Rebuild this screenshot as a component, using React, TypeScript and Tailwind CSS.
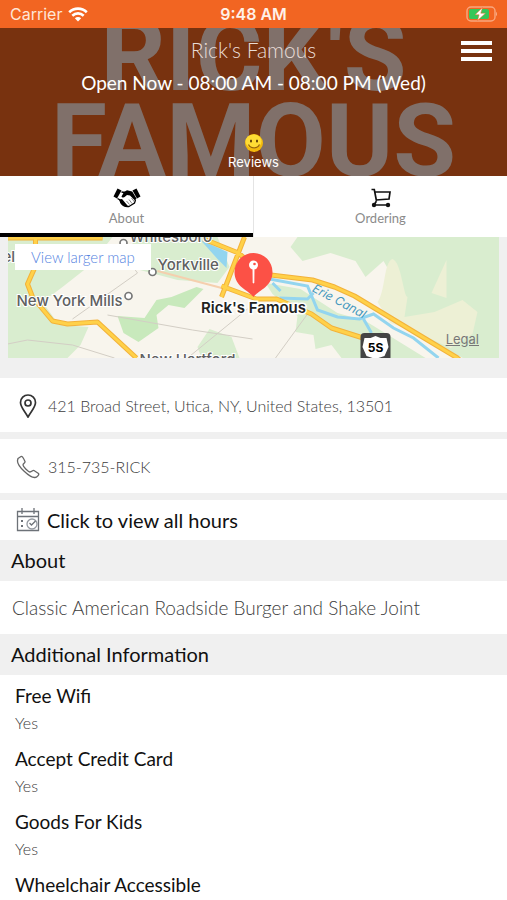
function StatusBar() {
  return (
    <div className="flex h-7 items-center justify-between bg-[#f26522] px-[10px] text-[#ffe6d6]">
      <div className="flex flex-1 items-center gap-[6px] font-[Inter] text-[16px] leading-5">
        <span>Carrier</span>
        <svg viewBox="0 0 20 15" className="h-[15px] w-5" fill="none" stroke="#fff" strokeWidth="2.6" aria-hidden="true">
          <path d="M1.2 5.3C6.2.4 13.8.4 18.8 5.3" />
          <path d="M4.3 8.7c3.3-3.1 8.1-3.1 11.4 0" />
          <path d="M6.8 11.2c1.8-1.7 4.6-1.7 6.4 0L10 14.6z" fill="#fff" stroke="none" />
        </svg>
      </div>
      <span className="font-[Inter] text-[16px] leading-5 font-semibold text-[#fff1e8]">9:48 AM</span>
      <div className="flex flex-1 justify-end">
        <svg viewBox="0 0 33 16" className="h-4 w-[33px]" aria-hidden="true">
          <rect x="3" y="1" width="28" height="14" rx="4" fill="none" stroke="#f9a77e" strokeWidth="1.4" />
          <rect x="5" y="3" width="20" height="10" rx="2" fill="#35c759" />
          <path d="M32 5.8c1.4.7 1.4 3.7 0 4.4z" fill="#f9a77e" />
          <path d="M18.500 1.500 11 8.800h4.100L13.500 14.500l8-7.300h-4.700z" fill="#fff" stroke="#f26522" strokeWidth=".5" />
        </svg>
      </div>
    </div>
  );
}

function Header() {
  return (
    <header className="relative h-[148px] overflow-hidden bg-[#78320f]">
      <div
        aria-hidden="true"
        className="absolute inset-x-0 -top-4 text-center font-[Roboto] text-[102px] leading-[86px] font-bold text-[#80706a]"
      >
        <div>RICK'S</div>
        <div>FAMOUS</div>
      </div>
      <div className="relative flex flex-col items-center">
        <h1 className="mt-[9px] text-[21px] leading-[26px] font-light text-[#e8dcd6]">Rick's Famous</h1>
        <p className="mt-2 text-[19px] leading-6 text-white">Open Now - 08:00 AM - 08:00 PM (Wed)</p>
        <button className="mt-[38px] flex flex-col items-center gap-px text-white">
          <svg viewBox="0 0 20 20" className="h-5 w-5" aria-hidden="true">
            <circle cx="10" cy="10" r="9" fill="#f3b90c" />
            <ellipse cx="9.500" cy="8.500" rx="8" ry="7" fill="#ffdc35" />
            <ellipse cx="7" cy="8" rx="1" ry="1.600" fill="#5b3a06" />
            <ellipse cx="13" cy="8" rx="1" ry="1.600" fill="#5b3a06" />
            <path d="M4.500 11.500c2 4.500 9 4.500 11 0" fill="none" stroke="#9a650a" strokeWidth="1.200" />
          </svg>
          <span className="font-[Inter] text-[13px] leading-4">Reviews</span>
        </button>
      </div>
      <button aria-label="Menu" className="absolute top-[13px] right-[15px] flex w-[31px] flex-col gap-1">
        <span className="h-1 bg-white" />
        <span className="h-1 bg-white" />
        <span className="h-1 bg-white" />
      </button>
    </header>
  );
}

function Tabs() {
  return (
    <nav className="flex h-[61px] bg-white text-[13px] leading-4 text-[#8b8b8b]">
      <button className="flex flex-1 flex-col items-center border-b-4 border-black pt-3">
        <svg viewBox="0 0 28 20" className="h-5 w-7" aria-hidden="true">
          <path d="M4.500.5 8.500 2.500 4 10.500.5 8.500zM23.500.5l-4 2L24 10.500l3.500-2z" fill="#000" />
          <path d="M8.500 4 12 4.500M4.500 10.500 7 12l1 3c2 3 5 4 8 3.500l5.500-3.500 1-3" fill="none" stroke="#000" strokeWidth="1.300" />
          <path d="M6 11.500 9 11l5.500 6.500 2 1.200c-4 .8-7-.7-8.800-3.400zM19.200 3.500 14 2.300 11 4 8.500 8.500c.5 1.600 2.600 1.300 3.700 0L14 7l3 .5 5 5 1.500-2z" fill="#000" />
          <path d="m13.500 13 3 3.500m-.5-5 3 4m-.5-5.500 3 4" fill="none" stroke="#666" strokeWidth=".8" />
        </svg>
        <span className="mt-[2px]">About</span>
      </button>
      <button className="flex flex-1 flex-col items-center border-l border-[#e4e4e4] pt-3">
        <svg viewBox="0 0 22 20" className="h-5 w-[22px]" fill="none" stroke="#111" strokeWidth="1.700" aria-hidden="true">
          <path d="M1.500 1.500h2.800l2.200 11.500M4.500 4H20l-1 7-13 1M6.500 13 4 17h15" />
          <circle cx="4" cy="17" r="2.200" fill="#111" stroke="none" />
          <circle cx="18" cy="17" r="2.200" fill="#111" stroke="none" />
        </svg>
        <span className="mt-[2px]">Ordering</span>
      </button>
    </nav>
  );
}

const roads =
  "M0 1h95m-67 0v28l-8 18 5 13 20 24 15 3 30-2 39 36M196 2l35 14 24 21 50 6 22 7 20 9 63 38 40 24 8 8M237 0l-23 60M214 49l35 13h20l35 15 20 14 38 12";

function MapView() {
  return (
    <section className="bg-[#f0f0f0] px-2 pb-5">
      <div className="relative h-[121px] overflow-hidden bg-[#f8f5ed]">
        <svg viewBox="0 0 492 121" preserveAspectRatio="xMidYMid slice" className="h-full w-full font-[Inter]" role="img" aria-label="Map of Utica">
          <path d="M0 0h105l-22 28-28 22-20 15 18 25 15 6-1 14-12 11H0zM125 0h85l12 30-12 16-40-3-45-12z" fill="#d9edcf" />
          <path d="m55 88 26 2-8 18-13 13H0V88z" fill="#d9edcf" />
          <path d="m290 0-7 10 12 14 28-8 25 8 10 16 18-16 15 26 5 40 67 35H492V0zM258 46l35 6 37 24 28 8 60 37h-84l-10-13-16 4-2-14-18-3 2-16-25-22z" fill="#d9edcf" />
          <path d="M370 65c8-10 6-40 15-43 9 3 11 38 15 38l-3 20 30-5 28-12 15 12-5 22-22 14-35-16-25-9z" fill="#edf0d5" />
          <path d="m424 56 15-33v38z" fill="#edf0d5" />
          <path d="m110 79 27 2 12-18 15-3 25-10 7 2-19 19-16-3-12 10 2 13-20 14-15-9z" fill="#c8e9bc" />
          <path d="m190 110 12-18 22 8 8 21h-38z" fill="#d9edcf" />
          <path d="m0 107 20-4 45 5 42 13M65 82l65-46-15-20M240 72l-60 49M100 78l85 15 60 9M300 77l-32 44" fill="none" stroke="#d3cec5" />
          <path d="m193 3 27 12-1 16-9-9z" fill="#93d5ef" />
          <path d="m262 42 38 7 5 12 5 12 20 7 22 2 14-5 20 14 20 10 25 20M272 61l28 1 6-6M265 46l8 8M356 82l8 14" fill="none" stroke="#93d5ef" strokeWidth="3" />
          <path d="m150 34 68 18" stroke="#f5cfae" strokeWidth="2" />
          <g fill="none" strokeLinejoin="round">
            <path d={roads} stroke="#f3b23a" strokeWidth="5" />
            <path d={roads} stroke="#ffd149" strokeWidth="3" />
          </g>
          <g fill="#606060" stroke="#fff" strokeWidth="2" paintOrder="stroke" fontSize="15" fontWeight="500">
            <text x="122" y="5">Whitesboro</text>
            <text x="150" y="33">Yorkville</text>
            <text x="9" y="69">New York Mills</text>
            <text x="132" y="128">New Hartford</text>
            <text x="-5" y="25">el</text>
          </g>
          <g fill="#fff" stroke="#777" strokeWidth="1.700">
            <circle cx="116" cy="6" r="3.500" />
            <circle cx="145" cy="35" r="3.500" />
            <circle cx="121" cy="59" r="3.500" />
          </g>
          <text x="304" y="54" transform="rotate(28 304 54)" fill="#4397bd" fontSize="12" fontStyle="italic">Erie Canal</text>
          <path d="M246 60c-5-7-19-10-19-25a19 19 0 0 1 38 0c0 15-14 18-19 25z" fill="#fc5146" />
          <circle cx="246" cy="28" r="4.500" fill="#fff" />
          <circle cx="247" cy="27" r="1.300" fill="#fc5146" />
          <path d="M245.500 31h1l-.2 15h-.6z" fill="#fff" stroke="#fff" />
          <text x="246" y="76" textAnchor="middle" fill="#222" stroke="#fff" strokeWidth="3" paintOrder="stroke" fontSize="15" fontWeight="600">Rick's Famous</text>
          <rect x="353" y="96" width="30" height="28" rx="4" fill="#444" />
          <path d="m368 99 5 2h6l2 9-4 9-9 3-9-3-4-9 2-9h6z" fill="#fff" />
          <text x="368" y="115" textAnchor="middle" fontSize="12" fontWeight="700">5S</text>
        </svg>
        <a href="#map" className="absolute top-[7px] left-[7px] bg-white px-4 py-[3px] text-[15px] leading-5 font-light text-[#5584df]">View larger map</a>
        <a href="#legal" className="absolute right-5 bottom-[11px] font-[Inter] text-[13px] leading-4 text-[#777] underline">Legal</a>
      </div>
    </section>
  );
}

function Contact() {
  return (
    <section className="flex flex-col gap-[7px] bg-[#f0f0f0] text-[16px] font-light text-[#3c3c3c]">
      <div className="flex h-[54px] items-center gap-2 bg-white pt-[2px] pl-4">
        <svg viewBox="0 0 24 24" className="h-6 w-6" fill="none" stroke="#333" strokeWidth="1.700" aria-hidden="true">
          <path d="M12 23C8 16 4.500 13 4.500 8.500a7.500 7.500 0 0 1 15 0C19.500 13 16 16 12 23z" />
          <circle cx="12" cy="9" r="3" />
        </svg>
        <span>421 Broad Street, Utica, NY, United States, 13501</span>
      </div>
      <div className="flex h-[54px] items-center gap-2 bg-white pt-[2px] pl-4">
        <svg viewBox="0 0 24 24" className="h-6 w-6" fill="none" stroke="#666" strokeWidth="1.300" aria-hidden="true">
          <path d="M2 3.500 5 1.500c1-.5 2 .5 4 5 .5 1.500-2 2-2 3.500s5 7 7 7 2.500-2 4-1.500l4.500 3c1 1-1.500 4-3.500 4C14 23 1 11 1.500 5.500z" />
        </svg>
        <a href="tel:3157357425">315-735-RICK</a>
      </div>
      <button className="flex h-10 items-center gap-[7px] bg-white pl-4 text-[20px] font-normal text-[#111]">
        <svg viewBox="0 0 24 24" className="h-6 w-6" fill="none" stroke="#6d7278" strokeWidth="1.300" aria-hidden="true">
          <path d="M1.500 3.500h21v19h-21zM1.500 8.500h21M6 0v6M18 0v6" />
          <path d="M5 13h2M5 18h2" strokeWidth="2" />
          <circle cx="16" cy="16" r="5" stroke="#9499a0" />
          <path d="m13.500 15 2 2 4-4" />
        </svg>
        <span>Click to view all hours</span>
      </button>
    </section>
  );
}

const details = ["Free Wifi", "Accept Credit Card", "Goods For Kids", "Wheelchair Accessible"];

export default function App() {
  return (
    <main className="h-screen overflow-y-auto bg-white font-[Lato,sans-serif] [scrollbar-width:none]">
      <StatusBar />
      <Header />
      <Tabs />
      <MapView />
      <Contact />
      <h2 className="bg-[#f0f0f0] px-[11px] py-2 text-[20px] leading-[25px] text-[#111]">About</h2>
      <p className="px-3 py-[14px] text-[19px] leading-[25px] font-light text-[#3c3c3c]">Classic American Roadside Burger and Shake Joint</p>
      <h2 className="bg-[#f0f0f0] px-[11px] py-2 text-[20px] leading-[25px] text-[#111]">Additional Information</h2>
      <dl className="px-[15px] pt-2">
        {details.map((name) => (
          <div key={name} className="pb-[11px]">
            <dt className="text-[19px] leading-[26px] text-[#111]">{name}</dt>
            <dd className="pt-[2px] text-[16px] leading-6 font-light text-[#3c3c3c]">Yes</dd>
          </div>
        ))}
      </dl>
    </main>
  );
}
